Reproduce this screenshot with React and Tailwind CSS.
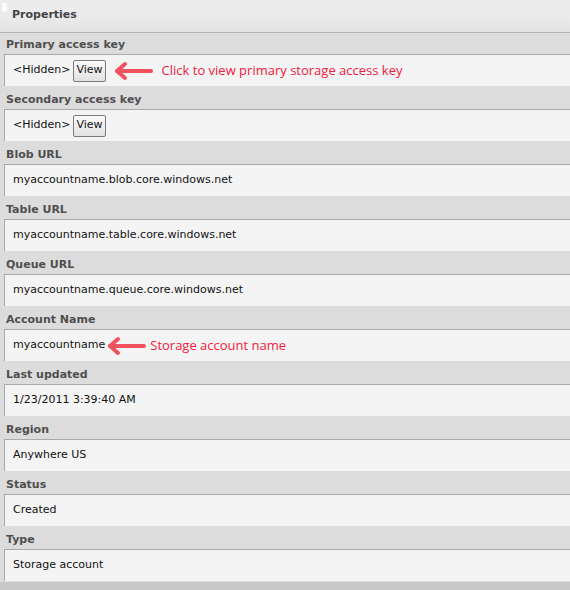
// Panel de propiedades de la cuenta de almacenamiento.
const FONT = { fontFamily: '"DejaVu Sans", Verdana, sans-serif' }
const NOTE_FONT = { fontFamily: '"Open Sans", "Noto Sans", sans-serif' }

const PROPS = [
  {
    label: 'Primary access key',
    hidden: true,
    note: 'Click to view primary storage access key',
    arrowGap: 'ml-[8px]',
    noteGap: 'ml-[8px]',
  },
  { label: 'Secondary access key', hidden: true },
  { label: 'Blob URL', value: 'myaccountname.blob.core.windows.net' },
  { label: 'Table URL', value: 'myaccountname.table.core.windows.net' },
  { label: 'Queue URL', value: 'myaccountname.queue.core.windows.net' },
  {
    label: 'Account Name',
    value: 'myaccountname',
    note: 'Storage account name',
    arrowGap: 'ml-[2px]',
    noteGap: 'ml-[3px]',
  },
  { label: 'Last updated', value: '1/23/2011 3:39:40 AM' },
  { label: 'Region', value: 'Anywhere US' },
  { label: 'Status', value: 'Created' },
  { label: 'Type', value: 'Storage account' },
]

function Arrow() {
  return (
    <svg width="40" height="22" viewBox="0 0 40 22" className="shrink-0">
      <g stroke="#f2525e" strokeWidth="4" strokeLinecap="round" strokeLinejoin="round" fill="none">
        <line x1="3" y1="11" x2="37" y2="11" />
        <polyline points="11,4 3,11 11,18" />
      </g>
    </svg>
  )
}

function Row({ label, value, hidden, note, arrowGap, noteGap, first }) {
  return (
    <div className="flex flex-col">
      <div
        className={`flex items-end pb-[4px] pl-[6px] text-[11px] leading-[11px] font-bold text-[#4f4f4f] ${first ? 'h-[21px]' : 'h-[23px]'}`}
      >
        {label}
      </div>
      <div className="ml-[4px] flex h-[32px] items-center border-l border-t border-[#aaaaaa] bg-[#f4f4f4] pl-[8px] text-[11px] text-[#111111]">
        {hidden ? (
          <>
            <span>&lt;Hidden&gt;</span>
            <button className="ml-[3px] h-[22px] rounded-[2px] border border-[#7a7a7a] bg-gradient-to-b from-[#fafafa] to-[#e2e2e2] px-[2px] text-[11px] text-[#111111]">
              View
            </button>
          </>
        ) : (
          <span>{value}</span>
        )}
        {note && (
          <>
            <span className={arrowGap}>
              <Arrow />
            </span>
            <span className={`${noteGap} text-[13px] text-[#f0203c]`} style={NOTE_FONT}>
              {note}
            </span>
          </>
        )}
      </div>
    </div>
  )
}

export default function App() {
  return (
    <div className="flex h-[590px] w-[570px] flex-col overflow-hidden bg-[#dcdcdc]" style={FONT}>
      <div className="relative flex h-[33px] shrink-0 items-center border-b border-[#b4b4b4] bg-gradient-to-b from-[#ececec] via-[#ebebeb] to-[#e2e2e2] pb-[2px] pl-[12px] text-[11px] font-bold text-[#444444]">
        <span className="absolute left-[2px] top-[3px] h-[9px] w-[5px] rounded-b-[3px] bg-white/80" />
        Properties
      </div>
      {PROPS.map((p, i) => (
        <Row key={p.label} {...p} first={i === 0} />
      ))}
      <div className="mt-[1px] flex-1 bg-[#c8c8c8]" />
    </div>
  )
}
